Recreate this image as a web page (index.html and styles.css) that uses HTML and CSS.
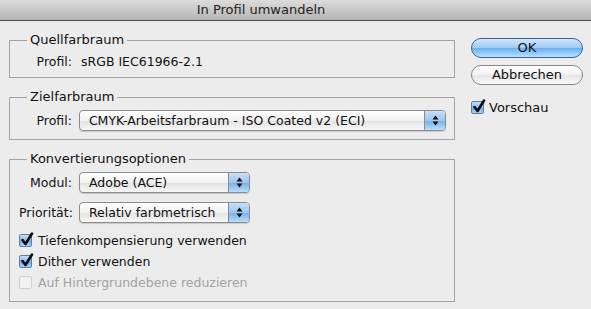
FILE: index.html
```html
<!DOCTYPE html>
<html lang="de">
<head>
    <meta charset="UTF-8">
    <title>In Profil umwandeln</title>
    <link rel="stylesheet" href="styles.css">
</head>
<body>
    <div class="titlebar">In Profil umwandeln</div>

    <div class="dialog">
        <div class="groups">
            <!-- Quellfarbraum -->
            <fieldset class="group">
                <legend>Quellfarbraum</legend>
                <div class="field">
                    <span class="field-label">Profil:</span>
                    <span class="field-value">sRGB IEC61966-2.1</span>
                </div>
            </fieldset>

            <!-- Zielfarbraum -->
            <fieldset class="group">
                <legend>Zielfarbraum</legend>
                <div class="field">
                    <span class="field-label">Profil:</span>
                    <div class="select select-wide">
                        <span class="select-text">CMYK-Arbeitsfarbraum - ISO Coated v2 (ECI)</span>
                        <span class="select-arrows">
                            <svg width="7" height="11" viewBox="0 0 7 11"><path d="M3.5 0.5 L6.5 4.5 L0.5 4.5 Z M3.5 10.5 L6.5 6.5 L0.5 6.5 Z" fill="#111"/></svg>
                        </span>
                    </div>
                </div>
            </fieldset>

            <!-- Konvertierungsoptionen -->
            <fieldset class="group">
                <legend>Konvertierungsoptionen</legend>
                <div class="field">
                    <span class="field-label">Modul:</span>
                    <div class="select select-short">
                        <span class="select-text">Adobe (ACE)</span>
                        <span class="select-arrows">
                            <svg width="7" height="11" viewBox="0 0 7 11"><path d="M3.5 0.5 L6.5 4.5 L0.5 4.5 Z M3.5 10.5 L6.5 6.5 L0.5 6.5 Z" fill="#111"/></svg>
                        </span>
                    </div>
                </div>
                <div class="field field-second">
                    <span class="field-label">Priorität:</span>
                    <div class="select select-short">
                        <span class="select-text">Relativ farbmetrisch</span>
                        <span class="select-arrows">
                            <svg width="7" height="11" viewBox="0 0 7 11"><path d="M3.5 0.5 L6.5 4.5 L0.5 4.5 Z M3.5 10.5 L6.5 6.5 L0.5 6.5 Z" fill="#111"/></svg>
                        </span>
                    </div>
                </div>

                <div class="checks">
                    <label class="check">
                        <span class="box checked">
                            <svg width="14" height="15" viewBox="0 0 14 15"><path d="M2.5 8 L5.5 12 L12 1.5" fill="none" stroke="#0d0d0d" stroke-width="2.6" stroke-linecap="round" stroke-linejoin="round"/></svg>
                        </span>
                        Tiefenkompensierung verwenden
                    </label>
                    <label class="check">
                        <span class="box checked">
                            <svg width="14" height="15" viewBox="0 0 14 15"><path d="M2.5 8 L5.5 12 L12 1.5" fill="none" stroke="#0d0d0d" stroke-width="2.6" stroke-linecap="round" stroke-linejoin="round"/></svg>
                        </span>
                        Dither verwenden
                    </label>
                    <label class="check disabled">
                        <span class="box"></span>
                        Auf Hintergrundebene reduzieren
                    </label>
                </div>
            </fieldset>
        </div>

        <div class="actions">
            <button type="button" class="btn btn-default">OK</button>
            <button type="button" class="btn">Abbrechen</button>
            <label class="check check-preview">
                <span class="box checked">
                    <svg width="14" height="15" viewBox="0 0 14 15"><path d="M2.5 8 L5.5 12 L12 1.5" fill="none" stroke="#0d0d0d" stroke-width="2.6" stroke-linecap="round" stroke-linejoin="round"/></svg>
                </span>
                Vorschau
            </label>
        </div>
    </div>
</body>
</html>
```

FILE: styles.css
```css
/* Page */
body {
    margin: 0;
    background-color: #ececec;
    font-family: "DejaVu Sans", "Noto Sans", sans-serif;
    font-size: 12.5px;
    color: #111;
    width: 591px;
    height: 309px;
    overflow: hidden;
}

/* Window title */
.titlebar {
    height: 20px;
    line-height: 20px;
    border-bottom: 1px solid #4f4f4f;
    background: linear-gradient(#dcdcdc, #b4b4b4);
    text-align: center;
    font-size: 13px;
    color: #222;
    padding-right: 69px;
}

/* Dialog body */
.dialog {
    display: flex;
    padding: 11px 0 0 9px;
}

.groups {
    width: 446px;
    display: flex;
    flex-direction: column;
    gap: 11px;
}

/* Group boxes */
.group {
    margin: 0;
    padding: 5px 8px 8px 9px;
    border: 1px solid #a3a3a3;
    min-width: 0;
}

.group legend {
    margin-left: 8px;
    padding: 0 3px;
    line-height: 16px;
    font-size: 13px;
}

.field {
    display: flex;
    align-items: center;
    gap: 7px;
    min-height: 16px;
}

.field-label {
    width: 53px;
    text-align: right;
}

.field-value {
    margin-left: 2px;
}

.field-second {
    margin-top: 9px;
}

/* Popup menus */
.select {
    height: 19px;
    display: flex;
    align-items: center;
    border: 1px solid #8c8c8c;
    border-radius: 4px;
    background: linear-gradient(#ffffff, #f1f1f1 50%, #e2e2e2 51%, #f6f6f6);
    box-shadow: 0 1px 1px rgba(0, 0, 0, 0.15);
    overflow: hidden;
}

.select-wide {
    width: 366px;
}

.select-short {
    width: 169px;
}

.select-text {
    flex: 1;
    padding-left: 9px;
    white-space: nowrap;
}

.select-arrows {
    width: 20px;
    height: 19px;
    display: flex;
    align-items: center;
    justify-content: center;
    border-left: 1px solid #7b8ea6;
    background: linear-gradient(#c9e0f7, #9cc5ef 50%, #79aee6 51%, #b9dcfa);
}

/* Checkboxes */
.checks {
    margin-top: 7px;
    display: flex;
    flex-direction: column;
}

.check {
    display: flex;
    align-items: center;
    gap: 6px;
    height: 21px;
}

.check.disabled {
    color: #a2a2a2;
}

.box {
    position: relative;
    width: 11px;
    height: 11px;
    border: 1px solid #a7a7a7;
    border-radius: 2px;
    background: linear-gradient(#fdfdfd, #ececec);
    flex-shrink: 0;
}

.box.checked {
    border-color: #5a7fa8;
    background: linear-gradient(#c5def7, #8bbcec 50%, #6aa6e4 51%, #a9d3fa);
}

.box svg {
    position: absolute;
    left: 0;
    top: -3px;
}

.check.disabled .box {
    border-color: #cfcfcf;
    background: #f1f1f1;
}

/* Buttons */
.actions {
    width: 112px;
    margin-left: 16px;
    padding-top: 6px;
    display: flex;
    flex-direction: column;
}

.btn {
    height: 20px;
    border: 1px solid #888;
    border-radius: 10px;
    background: linear-gradient(#ffffff, #f2f2f2 50%, #e4e4e4 51%, #fafafa);
    font-family: inherit;
    font-size: 13px;
    color: #111;
    padding: 0;
    line-height: 18px;
    margin-bottom: 7px;
}

.btn-default {
    border-color: #40609a;
    background: linear-gradient(#d2e6fb, #9ccaf4 50%, #6ab0ef 51%, #b7e0fd);
}

.check-preview {
    margin-top: 5px;
    gap: 5px;
    font-size: 13px;
}
```
